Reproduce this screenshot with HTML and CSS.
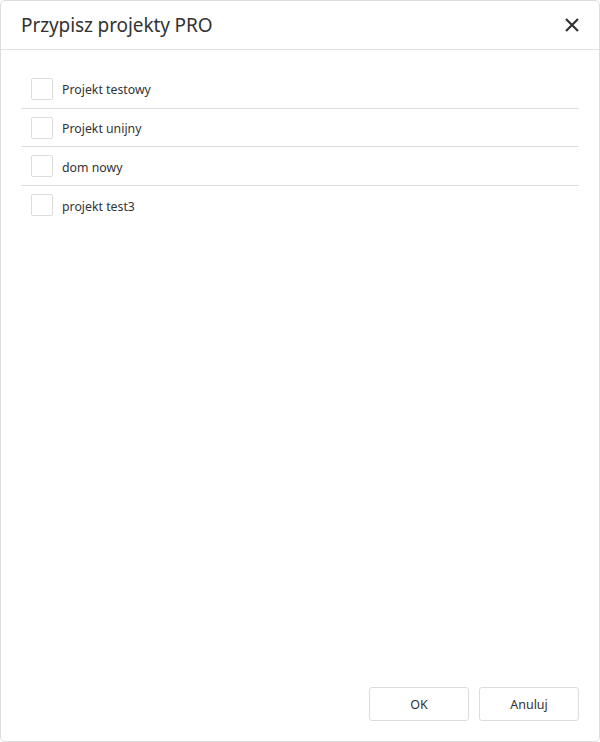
FILE: index.html
```html
<!DOCTYPE html>
<html lang="pl">
<head>
<meta charset="utf-8">
<title>Przypisz projekty PRO</title>
<link rel="stylesheet" href="styles.css">
</head>
<body>
<div class="dialog">
  <div class="header">
    <h1 class="title">Przypisz projekty PRO</h1>
    <button class="close" aria-label="Zamknij">
      <svg width="16" height="16" viewBox="0 0 16 16"><path d="M2 2 L14 14 M14 2 L2 14" stroke="#333" stroke-width="2.2" fill="none"/></svg>
    </button>
  </div>
  <div class="body">
    <ul class="list">
      <li class="row"><span class="check"></span><span class="label">Projekt testowy</span></li>
      <li class="row"><span class="check"></span><span class="label">Projekt unijny</span></li>
      <li class="row"><span class="check"></span><span class="label">dom nowy</span></li>
      <li class="row"><span class="check"></span><span class="label">projekt test3</span></li>
    </ul>
  </div>
  <div class="footer">
    <button class="btn">OK</button>
    <button class="btn">Anuluj</button>
  </div>
</div>
</body>
</html>
```
FILE: styles.css
```css
* { box-sizing: border-box; }
html, body { margin: 0; padding: 0; background: #fff; }
body { font-family: "Noto Sans", "Open Sans", sans-serif; color: #333; }
.dialog {
  width: 600px; height: 742px;
  border: 1px solid #dcdcdc;
  border-radius: 5px;
  display: flex; flex-direction: column;
  background: #fff;
}
.header {
  height: 49px;
  border-bottom: 1px solid #e0e0e0;
  display: flex; align-items: center; justify-content: space-between;
  padding: 0 19px 0 20px;
}
.title { margin: 0; font-size: 19px; font-weight: 400; color: #333; letter-spacing: -0.1px; }
.close { border: 0; background: none; padding: 0; width: 16px; height: 16px; display: flex; cursor: pointer; }
.body { flex: 1; padding: 20px 20px 0 20px; }
.list { list-style: none; margin: 0; padding: 0; }
.row {
  height: 38.7px;
  display: flex; align-items: center;
  padding-left: 10px;
  border-bottom: 1px solid #dedede;
}
.row:last-child { border-bottom: 0; }
.check {
  width: 22px; height: 22px;
  border: 1px solid #dcdcdc; border-radius: 2px;
  margin-right: 9px;
  flex: none;
}
.label { font-size: 12.3px; color: #333; padding-top: 2px; }
.footer {
  display: flex; justify-content: flex-end; gap: 10px;
  padding: 0 20px 20px 0;
}
.btn {
  width: 100px; height: 34px;
  border: 1px solid #dcdcdc; border-radius: 3px;
  background: #fff; color: #333;
  font-family: "Noto Sans", "Open Sans", sans-serif; font-size: 12.5px;
}
```
